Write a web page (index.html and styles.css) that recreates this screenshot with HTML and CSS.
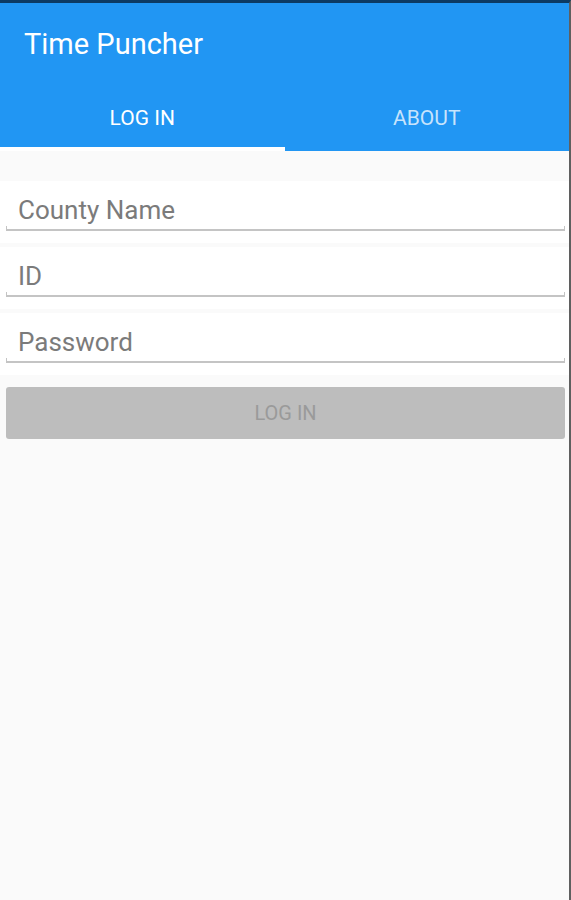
FILE: index.html
```html
<!DOCTYPE html>
<html lang="en">
<head>
  <meta charset="UTF-8">
  <title>Time Puncher</title>
  <link rel="stylesheet" href="styles.css">
</head>
<body>

  <div class="app">
    <header class="appbar">
      <div class="toolbar">Time Puncher</div>
      <nav class="tabs">
        <div class="tab active">LOG IN</div>
        <div class="tab">ABOUT</div>
      </nav>
    </header>

    <main class="login">
      <div class="field">
        <input type="text" placeholder="County Name">
        <div class="line"></div>
      </div>
      <div class="field">
        <input type="text" placeholder="ID">
        <div class="line"></div>
      </div>
      <div class="field">
        <input type="password" placeholder="Password">
        <div class="line"></div>
      </div>
      <button class="btn" disabled>LOG IN</button>
    </main>
  </div>

</body>
</html>
```

FILE: styles.css
```css
body {
  margin: 0;
  font-family: Roboto, 'Noto Sans', sans-serif;
  background: #fafafa;
}
.app {
  min-height: 900px;
  box-sizing: border-box;
  border-right: 2px solid #5f5f5f;
  border-top: 3px solid #0c3a63;
  background: #fafafa;
}
.appbar {
  background: #2196f3;
  color: #fff;
}
.toolbar {
  height: 82px;
  padding-left: 24px;
  font-size: 29px;
  line-height: 82px;
}
.tabs {
  display: flex;
}
.tab {
  flex: 1;
  height: 62px;
  line-height: 66px;
  text-align: center;
  font-size: 21px;
  color: rgba(255,255,255,0.75);
  border-bottom: 4px solid transparent;
}
.tab.active {
  color: #fff;
  border-bottom-color: #fff;
}
.login {
  padding: 30px 4px 0 6px;
  display: flex;
  flex-direction: column;
  gap: 4px;
}
.field {
  background: #fff;
  margin: 0 -4px 0 -6px;
  padding: 12px 4px 12px 6px;
}
.field input {
  display: block;
  width: 100%;
  box-sizing: border-box;
  border: none;
  outline: none;
  background: transparent;
  padding: 0 12px;
  height: 33px;
  font-family: Roboto, sans-serif;
  font-size: 26px;
  color: #333;
}
.field input::placeholder {
  color: #7b7b7b;
}
.line {
  height: 3px;
  border: 1px solid #c4c4c4;
  border-top: none;
  border-bottom-width: 2px;
}
.btn {
  margin-top: 8px;
  height: 52px;
  border: none;
  border-radius: 3px;
  background: #bdbdbd;
  color: #9a9a9a;
  font-family: Roboto, sans-serif;
  font-size: 20px;
}
```
